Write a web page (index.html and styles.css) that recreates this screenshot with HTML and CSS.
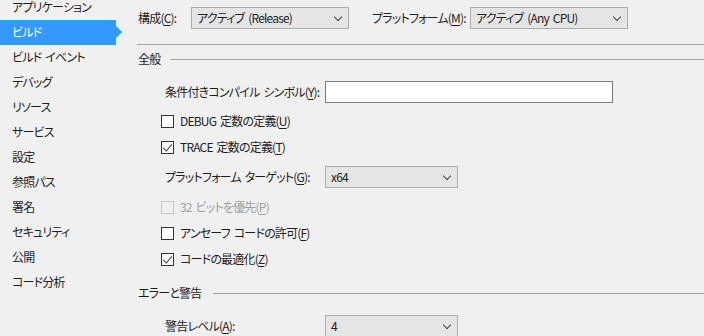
FILE: index.html
```html
<!DOCTYPE html>
<html lang="ja">
<head>
  <meta charset="UTF-8">
  <title>プロジェクトのプロパティ</title>
  <link rel="stylesheet" href="styles.css">
</head>
<body>
  <div class="page">
    <ul class="nav">
      <li>アプリケーション</li>
      <li class="active">ビルド</li>
      <li>ビルド イベント</li>
      <li>デバッグ</li>
      <li>リソース</li>
      <li>サービス</li>
      <li>設定</li>
      <li>参照パス</li>
      <li>署名</li>
      <li>セキュリティ</li>
      <li>公開</li>
      <li>コード分析</li>
    </ul>

    <div class="main">
      <div class="config-row">
        <span class="config-label">構成(<u>C</u>):</span>
        <div class="combo wide">アクティブ (Release)</div>
        <span class="config-label platform">プラットフォーム(<u>M</u>):</span>
        <div class="combo wide">アクティブ (Any CPU)</div>
      </div>
      <div class="rule"></div>

      <div class="section">全般</div>

      <div class="field first">
        <label>条件付きコンパイル シンボル(<u>Y</u>):</label>
        <div class="textbox"></div>
      </div>
      <div class="check-row after-text">
        <span class="check"></span>DEBUG 定数の定義(<u>U</u>)
      </div>
      <div class="check-row">
        <span class="check checked"></span>TRACE 定数の定義(<u>T</u>)
      </div>
      <div class="field combo-field">
        <label>プラットフォーム ターゲット(<u>G</u>):</label>
        <div class="combo">x64</div>
      </div>
      <div class="check-row disabled after-combo">
        <span class="check"></span>32 ビットを優先(<u>P</u>)
      </div>
      <div class="check-row">
        <span class="check"></span>アンセーフ コードの許可(<u>F</u>)
      </div>
      <div class="check-row">
        <span class="check checked"></span>コードの最適化(<u>Z</u>)
      </div>

      <div class="section errors">エラーと警告</div>

      <div class="field level">
        <label>警告レベル(<u>A</u>):</label>
        <div class="combo">4</div>
      </div>
    </div>
  </div>
</body>
</html>
```

FILE: styles.css
```css
body {
  margin: 0;
  background: #f0f0f0;
  color: #1e1e1e;
  font-family: "Noto Sans CJK JP", "Noto Sans", sans-serif;
  font-size: 12px;
  line-height: 16px;
  letter-spacing: -0.8px;
  word-spacing: 2px;
  font-feature-settings: "palt";
  white-space: nowrap;
  overflow: hidden;
}

u {
  text-decoration: underline;
  text-underline-offset: 2px;
}

.page {
  display: flex;
  height: 336px;
}

/* left navigation */
.nav {
  list-style: none;
  width: 130px;
  margin: -5px 0 0;
  padding: 0;
  flex-shrink: 0;
}

.nav li {
  height: 25px;
  line-height: 24px;
  padding-left: 12px;
  width: 104px;
  position: relative;
}

.nav li.active {
  background: #3399ff;
  color: #fff;
}

.nav li.active::after {
  content: "";
  position: absolute;
  left: 116px;
  top: 6px;
  border-left: 6px solid #3399ff;
  border-top: 6px solid transparent;
  border-bottom: 6px solid transparent;
}

/* main panel */
.main {
  flex: 1;
  padding-left: 7px;
}

.config-row {
  display: flex;
  align-items: center;
  margin-top: 7px;
  padding-left: 1px;
}

.config-label {
  width: 53px;
}

.config-label.platform {
  width: 98px;
  margin-left: 23px;
}

.combo {
  box-sizing: border-box;
  height: 22px;
  width: 133px;
  border: 1px solid #acacac;
  background: #e5e5e5;
  padding-left: 5px;
  line-height: 20px;
  position: relative;
}

.combo.wide {
  width: 158px;
}

.combo::after {
  content: "";
  position: absolute;
  right: 7px;
  top: 6px;
  width: 5px;
  height: 5px;
  border-right: 1px solid #444;
  border-bottom: 1px solid #444;
  transform: rotate(45deg);
}

.rule {
  height: 1px;
  background: #a0a0a0;
  margin-top: 15px;
}

.section {
  display: flex;
  align-items: center;
  gap: 11px;
  height: 16px;
  margin-top: 6px;
  padding-left: 1px;
}

.section::after {
  content: "";
  flex: 1;
  height: 1px;
  background: #a0a0a0;
}

.section.errors {
  margin-top: 13px;
}

.field {
  display: grid;
  grid-template-columns: 160px auto;
  align-items: center;
  margin-left: 28px;
  height: 22px;
}

.field.first {
  margin-top: 14px;
}

.field.combo-field {
  margin-top: 6px;
}

.field.level {
  margin-top: 14px;
}

.textbox {
  box-sizing: border-box;
  width: 288px;
  height: 22px;
  border: 1px solid #7a7a7a;
  background: #fff;
}

.check-row {
  display: flex;
  align-items: center;
  height: 26px;
  margin-left: 24px;
}

.check-row.after-text {
  margin-top: 5px;
}

.check-row.after-combo {
  margin-top: 6px;
}

.check {
  box-sizing: border-box;
  width: 13px;
  height: 13px;
  border: 1px solid #333;
  background: #fff;
  margin-right: 6px;
  position: relative;
}

.check.checked::after {
  content: "";
  position: absolute;
  left: 3px;
  top: 0px;
  width: 4px;
  height: 8px;
  border-right: 1px solid #333;
  border-bottom: 1px solid #333;
  transform: rotate(40deg);
}

.check-row.disabled {
  color: #a0a0a0;
}

.check-row.disabled .check {
  border-color: #c8c8c8;
  background: #f0f0f0;
}
```
